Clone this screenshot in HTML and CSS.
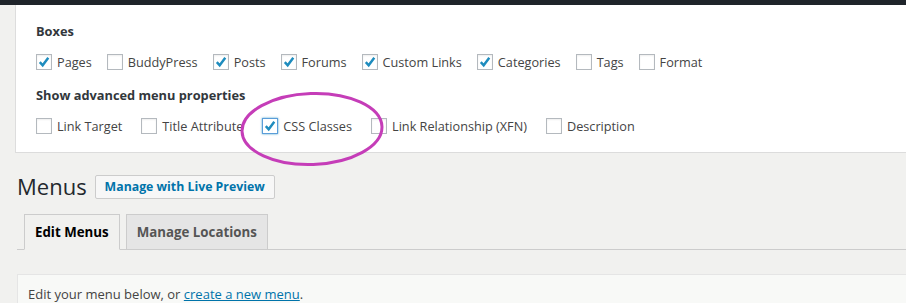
FILE: index.html
```html
<!DOCTYPE html>
<html lang="en">
<head>
<meta charset="UTF-8">
<meta name="viewport" content="width=device-width, initial-scale=1.0">
<title>Menus</title>
<link rel="stylesheet" href="styles.css">
</head>
<body>

<div class="adminbar"></div>

<div class="screenOptions">
    <h5 class="optTitle">Boxes</h5>
    <div class="optRow">
        <label class="opt"><span class="box checked"><svg viewBox="0 0 16 16"><path d="M3.2 8.2l3.3 3.6 6.4-8.6"/></svg></span>Pages</label>
        <label class="opt"><span class="box"></span>BuddyPress</label>
        <label class="opt"><span class="box checked"><svg viewBox="0 0 16 16"><path d="M3.2 8.2l3.3 3.6 6.4-8.6"/></svg></span>Posts</label>
        <label class="opt"><span class="box checked"><svg viewBox="0 0 16 16"><path d="M3.2 8.2l3.3 3.6 6.4-8.6"/></svg></span>Forums</label>
        <label class="opt"><span class="box checked"><svg viewBox="0 0 16 16"><path d="M3.2 8.2l3.3 3.6 6.4-8.6"/></svg></span>Custom Links</label>
        <label class="opt"><span class="box checked"><svg viewBox="0 0 16 16"><path d="M3.2 8.2l3.3 3.6 6.4-8.6"/></svg></span>Categories</label>
        <label class="opt"><span class="box"></span>Tags</label>
        <label class="opt"><span class="box"></span>Format</label>
    </div>
    <h5 class="optTitle second">Show advanced menu properties</h5>
    <div class="optRow wide">
        <label class="opt"><span class="box"></span>Link Target</label>
        <label class="opt"><span class="box"></span>Title Attribute</label>
        <label class="opt"><span class="box checked focused"><svg viewBox="0 0 16 16"><path d="M3.2 8.2l3.3 3.6 6.4-8.6"/></svg></span>CSS Classes</label>
        <label class="opt"><span class="box"></span>Link Relationship (XFN)</label>
        <label class="opt"><span class="box"></span>Description</label>
    </div>
    <svg class="circle" width="150" height="80" viewBox="0 0 150 80">
        <ellipse cx="75" cy="40" rx="70" ry="35.5" transform="rotate(-2 75 40)"/>
    </svg>
</div>

<div class="pageHead">
    <h1 class="pageTitle">Menus</h1>
    <a class="pageAction" href="#">Manage with Live Preview</a>
</div>

<h2 class="tabs">
    <a class="tab active" href="#">Edit Menus</a>
    <a class="tab" href="#">Manage Locations</a>
</h2>

<div class="notice">
    Edit your menu below, or <a href="#">create a new menu</a>.
</div>

</body>
</html>
```

FILE: styles.css
```css
body {
    margin: 0;
    background-color: #f1f1ef;
    font-family: "Open Sans", sans-serif;
    font-size: 13px;
    color: #444;
    overflow: hidden;
}

.adminbar {
    height: 5px;
    background-color: #1f242a;
}

.screenOptions {
    position: relative;
    margin-left: 15px;
    padding: 17px 20px 18px 20px;
    background-color: #fff;
    border-left: 1px solid #ddd;
    border-bottom: 1px solid #dcdcdc;
}

.optTitle {
    margin: 0;
    font-size: 12.8px;
    line-height: 18px;
    font-weight: 700;
    color: #32373c;
}

.optTitle.second {
    margin-top: 16px;
}

.optRow {
    display: flex;
    margin-top: 14px;
    height: 16px;
    align-items: center;
    font-size: 12.7px;
}

.opt {
    display: flex;
    align-items: center;
    margin-right: 15px;
    line-height: 16px;
    color: #444;
}

.optRow.wide .opt {
    margin-right: 19px;
}

.box {
    width: 14px;
    height: 14px;
    border: 1px solid #b4b9be;
    margin-right: 5px;
    background-color: #fff;
    box-shadow: inset 0 1px 2px rgba(0, 0, 0, 0.07);
}

.box svg {
    display: block;
    width: 14px;
    height: 14px;
}

.box svg path {
    fill: none;
    stroke: #1e8cbe;
    stroke-width: 2.8;
}

.box.focused {
    border-color: #5b9dd9;
    box-shadow: 0 0 2px rgba(30, 140, 190, 0.8);
}

.circle {
    position: absolute;
    left: 221px;
    top: 84px;
    overflow: visible;
}

.circle ellipse {
    fill: none;
    stroke: #c53db8;
    stroke-width: 3;
}

.pageHead {
    display: flex;
    align-items: center;
    margin: 19px 0 0 17px;
    height: 29px;
}

.pageTitle {
    margin: 0 8px 0 0;
    font-size: 22px;
    font-weight: 400;
    line-height: 29px;
    color: #23282d;
}

.pageAction {
    padding: 0 9px;
    height: 22px;
    line-height: 22px;
    border: 1px solid #ccc;
    border-radius: 2px;
    background-color: #f7f7f7;
    color: #0073aa;
    font-weight: 700;
    font-size: 12.3px;
    text-decoration: none;
}

.tabs {
    display: flex;
    margin: 13px 0 0 17px;
    padding: 0 0 0 7px;
    border-bottom: 1px solid #ccc;
    font-size: 13.3px;
    line-height: 24px;
}

.tab {
    margin: 0 6px -1px 0;
    padding: 5px 10px;
    border: 1px solid #ccc;
    background-color: #e5e5e5;
    color: #555;
    font-weight: 700;
    text-decoration: none;
}

.tab.active {
    background-color: #f1f1ef;
    border-bottom-color: #f1f1ef;
    color: #000;
}

.notice {
    margin: 24px 0 0 17px;
    padding: 9px 10px;
    background-color: #f8f9f7;
    border: 1px solid #e5e5e5;
    border-right: none;
    line-height: 20px;
}

.notice a {
    color: #0073aa;
}
```
